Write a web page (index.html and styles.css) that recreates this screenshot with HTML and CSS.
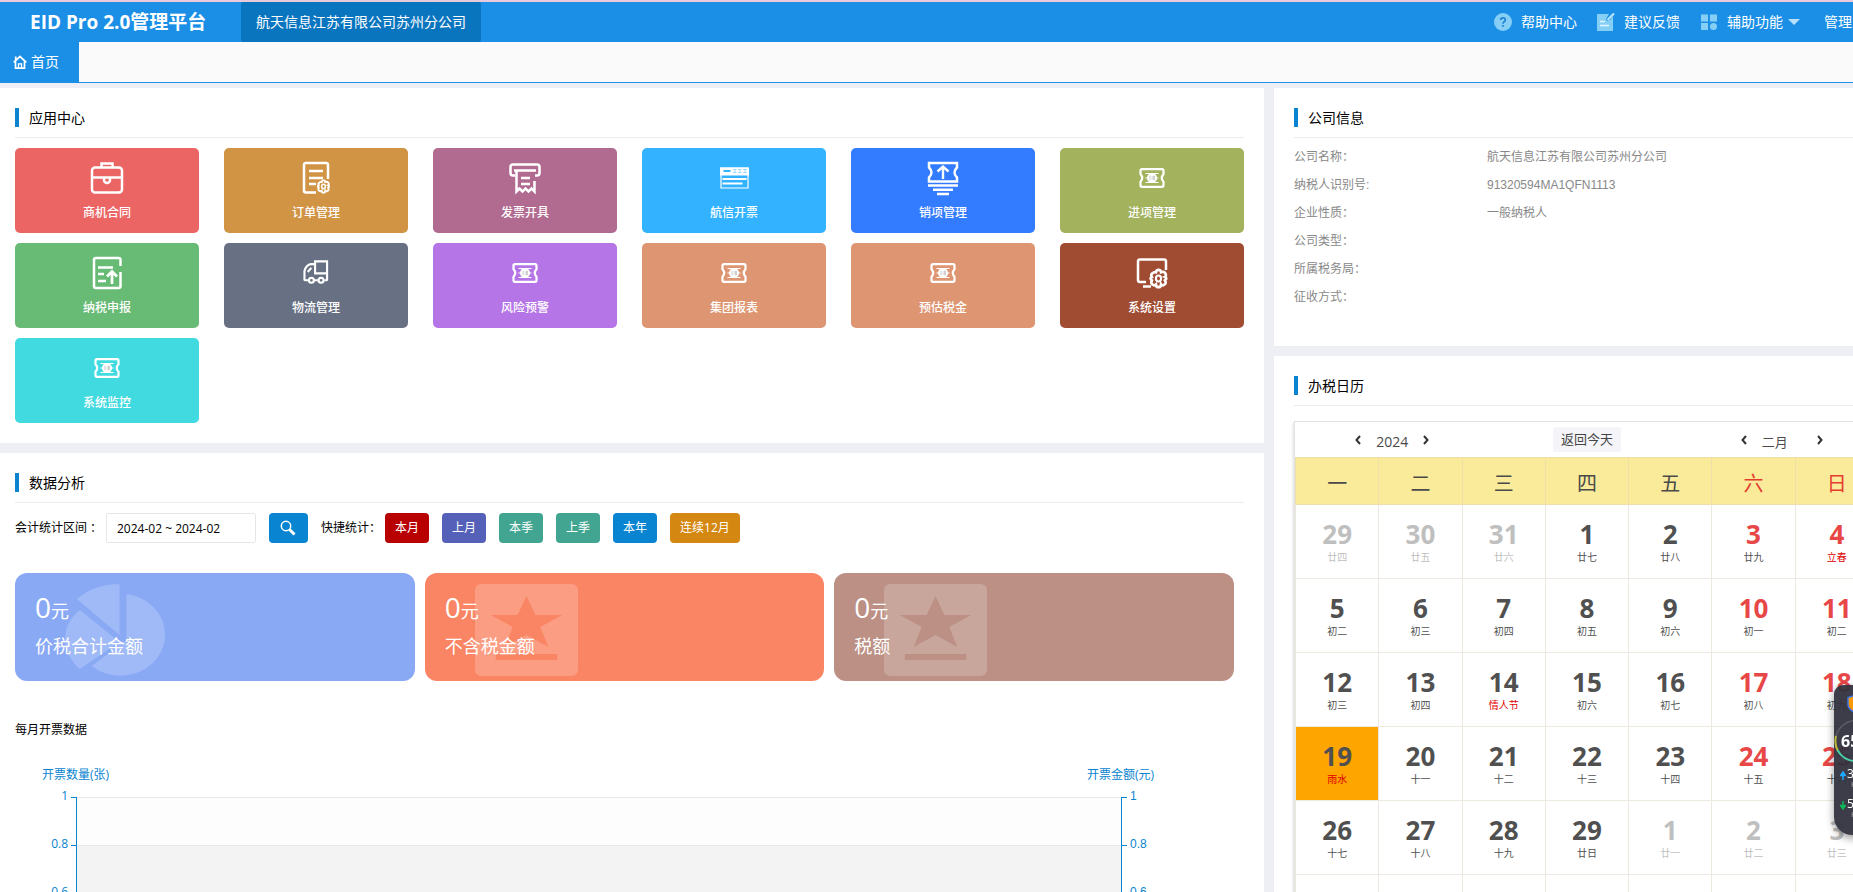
FILE: index.html
```html
<!DOCTYPE html>
<html lang="zh-CN">
<head>
<meta charset="utf-8">
<title>EID Pro 2.0管理平台</title>
<link rel="stylesheet" href="styles.css">
</head>
<body>
<svg class="defs" aria-hidden="true">
  <symbol id="i-ticket" viewBox="0 0 26 20">
    <path d="M3 1.200h20q1.500 0 1.500 1.500v3.500q-3.500 3.800 0 7.600v3.500q0 1.500-1.500 1.500H3q-1.500 0-1.500-1.500v-3.500q3.500-3.800 0-7.600V2.700Q1.500 1.200 3 1.200z" fill="none" stroke="currentColor" stroke-width="2.200"/>
    <circle cx="13" cy="10" r="5" fill="currentColor"/>
    <path d="M6.500 5.500h13M6.500 14.500h13M6.500 10h13" stroke="currentColor" stroke-width="1.200"/>
    <path d="M11 7.500v5M15 7.500v5M12.500 9h3.500M12.500 11h3.500" stroke="#0003" stroke-width="1"/>
  </symbol>
  <symbol id="i-gear" viewBox="0 0 14 14">
    <path d="M7 1.200q1.500 0 1.700 1.600 2.400-.8 3 1t-.4 2.200q1.800 1 0 2.300 1.200 1.800-.4 2.800t-2.200-.1Q8.500 12.800 7 12.800T5.300 11q-1.200 1-2.400 0t-.3-2.700q-1.800-1.300 0-2.300-1-1.400.3-2.500t2.400-.7Q5.500 1.200 7 1.200z" fill="none" stroke="currentColor" stroke-width="1.800"/>
    <ellipse cx="7" cy="7" rx="1.700" ry="2" fill="none" stroke="currentColor" stroke-width="1.400"/>
  </symbol>
</svg>
<div class="page">
  <header class="topbar">
    <h1 class="brand">EID Pro 2.0管理平台</h1>
    <div class="company-tag">航天信息江苏有限公司苏州分公司</div>
    <nav class="tools">
      <a class="tool" href="#">
        <svg class="tool-icon" viewBox="0 0 18 18"><circle cx="9" cy="9" r="9" fill="#85cff7"/><path d="M6.700 7q0-2.300 2.300-2.300T11.300 7q0 1.200-1.200 1.900Q9 9.600 9 10.800M9 12v1.800" fill="none" stroke="#1b7fcf" stroke-width="1.600"/></svg>
        帮助中心</a>
      <a class="tool" href="#">
        <svg class="tool-icon" viewBox="0 0 18 18"><path d="M0 1h12l-3 5 1 2 3-1 3-4v15H0z" fill="#85cff7"/><path d="M3 8.500h5M3 12.500h9" stroke="#e4f5ff" stroke-width="1.500"/><path d="M10.500 7L17 .5" stroke="#b5e2fc" stroke-width="2.200"/></svg>
        建议反馈</a>
      <a class="tool" href="#">
        <svg class="tool-icon" viewBox="0 0 18 18"><path d="M1 1.500h7v7H1zM10 1.500h7v7h-7zM1 10h7v7H1z" fill="#85cff7"/><circle cx="13.500" cy="13.500" r="3.500" fill="#85cff7"/></svg>
        辅助功能<span class="caret"></span></a>
      <a class="tool tool-user" href="#">管理员</a>
    </nav>
  </header>
  <nav class="tabs">
    <a class="tab" href="#"><svg class="tab-icon" viewBox="0 0 14 14"><path d="M.7 7.300L7 1.500l6.300 5.800M2.500 6.500v6.700h9V6.500M2.700 5V1.500" fill="none" stroke="currentColor" stroke-width="1.700"/><path d="M5.500 13V8.800h3V13" fill="none" stroke="currentColor" stroke-width="1.300"/></svg>首页</a>
  </nav>

  <main class="board">
    <div class="col">
      <section class="panel">
        <h2 class="panel-title">应用中心</h2>
        <div class="tiles">
          <a class="tile red" href="#"><svg class="tile-icon" viewBox="0 0 36 36"><g fill="none" stroke="currentColor" stroke-width="2.500"><rect x="3" y="7.500" width="30" height="25" rx="3"/><path d="M12.500 7V3.500h11V7M3 17.500h30M15 18v2a3 3 0 0 0 6 0v-2"/></g></svg>商机合同</a>
          <a class="tile amber" href="#"><svg class="tile-icon" viewBox="0 0 36 36"><path d="M18 32.500H8q-2 0-2-2V5q0-2 2-2h20q2 0 2 2v14" fill="none" stroke="currentColor" stroke-width="2.500"/><path d="M11 11h14M11 18h14M11 24h7" stroke="currentColor" stroke-width="2.500"/><use href="#i-gear" x="18" y="19" width="15" height="15"/></svg>订单管理</a>
          <a class="tile plum" href="#"><svg class="tile-icon" viewBox="0 0 36 36"><path d="M8 15.500H6q-2.500 0-2.500-2.500V7Q3.500 4.500 6 4.500h24q2.500 0 2.500 2.500v6q0 2.500-2.500 2.500h-2M7 10.500h22M9.500 10.500v21l3-3 3 3 3-3 3 3 3-3 3 3V21" fill="none" stroke="currentColor" stroke-width="2.500"/><path d="M14 18h9M14 24h9" stroke="currentColor" stroke-width="2.500"/></svg>发票开具</a>
          <a class="tile sky" href="#"><svg class="tile-icon" viewBox="0 0 36 36"><path d="M5 8h27v20H5z" fill="none" stroke="currentColor" stroke-width="1.200"/><path d="M4 7.500h29v8H4z" fill="currentColor"/><path d="M7.500 11h7" stroke="#32b2ff" stroke-width="2"/><path d="M17 9.500h3.500M17 12.500h3.500M22 9.500h3.500M22 12.500h3.500M27 9.500h4M27 12.500h4M19 9v4M24 9v4M29 9v4" stroke="#8fd5ff" stroke-width=".8"/><path d="M6.500 19h24M6.500 23.500h20" stroke="currentColor" stroke-width="2"/></svg>航信开票</a>
          <a class="tile blue" href="#"><svg class="tile-icon" viewBox="0 0 36 36"><path d="M4 3h28v4.500q-5 5 0 10V21.500H4v-4q5-5 0-10z" fill="none" stroke="currentColor" stroke-width="2.500"/><path d="M18 19V7M12.500 11.500L18 6.500l5.500 5M3 25.500h30M8 29.700h20M12 34h12" fill="none" stroke="currentColor" stroke-width="2.400"/></svg>销项管理</a>
          <a class="tile olive" href="#"><svg class="tile-icon small"><use href="#i-ticket"/></svg>进项管理</a>
          <a class="tile green" href="#"><svg class="tile-icon" viewBox="0 0 36 36"><path d="M31.500 11V5q0-2-2-2H7Q5 3 5 5v26q0 2 2 2h22.500q2 0 2-2V17" fill="none" stroke="currentColor" stroke-width="2.500"/><path d="M9 12.500h15M9 19h6M9 26h8M23 29V17M18 21.500l5-5 5 5" fill="none" stroke="currentColor" stroke-width="2.700"/></svg>纳税申报</a>
          <a class="tile slate" href="#"><svg class="tile-icon truck" viewBox="4 5 28 26"><g fill="none" stroke="currentColor" stroke-width="2.300"><path d="M9.500 27H6.500q-1 0-1-1v-9q2-7 7-7.500h4.500M17 6.500h13v13H17zM30 19.500V26q0 1-1 1h-2M16 27h4"/><circle cx="13" cy="27" r="2.700"/><circle cx="23.500" cy="27" r="2.700"/><path d="M9 18l4-4.500"/></g></svg>物流管理</a>
          <a class="tile violet" href="#"><svg class="tile-icon small"><use href="#i-ticket"/></svg>风险预警</a>
          <a class="tile salmon" href="#"><svg class="tile-icon small"><use href="#i-ticket"/></svg>集团报表</a>
          <a class="tile salmon" href="#"><svg class="tile-icon small"><use href="#i-ticket"/></svg>预估税金</a>
          <a class="tile brick" href="#"><svg class="tile-icon" viewBox="0 0 36 36"><path d="M12 27H6q-2 0-2-2V6.500q0-2 2-2h24q2 0 2 2V15M9 31.500h8" fill="none" stroke="currentColor" stroke-width="2.500"/><use href="#i-gear" x="14" y="13" width="21" height="21"/></svg>系统设置</a>
          <a class="tile cyan" href="#"><svg class="tile-icon small"><use href="#i-ticket"/></svg>系统监控</a>
        </div>
      </section>

      <section class="panel panel-data">
        <h2 class="panel-title">数据分析</h2>
        <form class="filter">
          <label class="filter-label" for="range">会计统计区间 ：</label>
          <input class="range" id="range" type="text" value="2024-02 ~ 2024-02">
          <button class="btn search" type="button" aria-label="查询"><svg class="search-icon" viewBox="0 0 16 16"><circle cx="6" cy="6" r="4.700" fill="none" stroke="#fff" stroke-width="1.500"/><path d="M9.500 9.500l5 5" stroke="#fff" stroke-width="3"/></svg></button>
          <span class="filter-label quick">快捷统计：</span>
          <button class="btn crimson" type="button">本月</button>
          <button class="btn indigo" type="button">上月</button>
          <button class="btn teal" type="button">本季</button>
          <button class="btn teal" type="button">上季</button>
          <button class="btn azure" type="button">本年</button>
          <button class="btn gold" type="button">连续12月</button>
        </form>
        <div class="cards">
          <article class="card periwinkle">
            <svg class="card-icon" viewBox="0 0 104 92" preserveAspectRatio="none"><g fill="#fff" fill-opacity=".2"><path d="M55 0v51L12 15Q30 0 55 0z"/><path d="M15 26l40 32-40 27Q0 72 0 54 1 37 15 26z"/><path d="M62 10A45 41 0 1 1 27 82L62 56z"/></g></svg>
            <p class="amount">0<span class="unit">元</span></p><p class="card-label">价税合计金额</p></article>
          <article class="card coral">
            <svg class="card-icon" viewBox="0 0 104 92" preserveAspectRatio="none"><path fill="#fff" fill-opacity=".2" fill-rule="evenodd" d="M7 0h90q7 0 7 7v78q0 7-7 7H7q-7 0-7-7V7Q0 0 7 0zM52 12l-9 19H16l22 12-8 20 22-12 22 12-8-20 22-12H61zM21 70v6h62v-6z"/></svg>
            <p class="amount">0<span class="unit">元</span></p><p class="card-label">不含税金额</p></article>
          <article class="card mocha">
            <svg class="card-icon" viewBox="0 0 104 92" preserveAspectRatio="none"><path fill="#fff" fill-opacity=".2" fill-rule="evenodd" d="M7 0h90q7 0 7 7v78q0 7-7 7H7q-7 0-7-7V7Q0 0 7 0zM52 12l-9 19H16l22 12-8 20 22-12 22 12-8-20 22-12H61zM21 70v6h62v-6z"/></svg>
            <p class="amount">0<span class="unit">元</span></p><p class="card-label">税额</p></article>
        </div>
        <h3 class="chart-title">每月开票数据</h3>
        <div class="chart">
          <div class="axis-names"><span>开票数量(张)</span><span>开票金额(元)</span></div>
          <div class="band"><span class="tick left">1</span><div class="plot"></div><span class="tick right">1</span></div>
          <div class="band shaded"><span class="tick left">0.8</span><div class="plot"></div><span class="tick right">0.8</span></div>
          <div class="band"><span class="tick left">0.6</span><div class="plot"></div><span class="tick right">0.6</span></div>
        </div>
      </section>
    </div>

    <div class="col">
      <section class="panel panel-side panel-company">
        <h2 class="panel-title">公司信息</h2>
        <dl class="info">
          <dt>公司名称：</dt><dd>航天信息江苏有限公司苏州分公司</dd>
          <dt>纳税人识别号:</dt><dd>91320594MA1QFN1113</dd>
          <dt>企业性质：</dt><dd>一般纳税人</dd>
          <dt>公司类型：</dt><dd></dd>
          <dt>所属税务局：</dt><dd></dd>
          <dt>征收方式：</dt><dd></dd>
        </dl>
      </section>
      <section class="panel panel-side panel-calendar">
        <h2 class="panel-title">办税日历</h2>
        <div class="calendar">
          <div class="cal-bar">
            <div class="stepper"><button class="arrow" type="button" aria-label="上一年"><svg class="chev" viewBox="0 0 6 10"><path d="M5 1L1.500 5 5 9"/></svg></button><span class="year">2024</span><button class="arrow" type="button" aria-label="下一年"><svg class="chev" viewBox="0 0 6 10"><path d="M1 1l3.500 4L1 9"/></svg></button></div>
            <div class="stepper"><button class="today-btn" type="button">返回今天</button></div>
            <div class="stepper"><button class="arrow" type="button" aria-label="上个月"><svg class="chev" viewBox="0 0 6 10"><path d="M5 1L1.500 5 5 9"/></svg></button><span class="month">二月</span><button class="arrow" type="button" aria-label="下个月"><svg class="chev" viewBox="0 0 6 10"><path d="M1 1l3.500 4L1 9"/></svg></button></div>
          </div>
          <table class="cal">
            <thead><tr><th>一</th><th>二</th><th>三</th><th>四</th><th>五</th><th class="rest">六</th><th class="rest">日</th></tr></thead>
            <tbody>
              <tr><td class="out">29<small>廿四</small></td><td class="out">30<small>廿五</small></td><td class="out">31<small>廿六</small></td><td>1<small>廿七</small></td><td>2<small>廿八</small></td><td class="we">3<small>廿九</small></td><td class="we">4<small class="fest">立春</small></td></tr>
              <tr><td>5<small>初二</small></td><td>6<small>初三</small></td><td>7<small>初四</small></td><td>8<small>初五</small></td><td>9<small>初六</small></td><td class="we">10<small>初一</small></td><td class="we">11<small>初二</small></td></tr>
              <tr><td>12<small>初三</small></td><td>13<small>初四</small></td><td>14<small class="fest">情人节</small></td><td>15<small>初六</small></td><td>16<small>初七</small></td><td class="we">17<small>初八</small></td><td class="we">18<small>初九</small></td></tr>
              <tr><td class="now">19<small class="fest">雨水</small></td><td>20<small>十一</small></td><td>21<small>十二</small></td><td>22<small>十三</small></td><td>23<small>十四</small></td><td class="we">24<small>十五</small></td><td class="we">25<small>十六</small></td></tr>
              <tr><td>26<small>十七</small></td><td>27<small>十八</small></td><td>28<small>十九</small></td><td>29<small>廿日</small></td><td class="out">1<small>廿一</small></td><td class="out">2<small>廿二</small></td><td class="out">3<small>廿三</small></td></tr>
              <tr><td></td><td></td><td></td><td></td><td></td><td></td><td></td></tr>
            </tbody>
          </table>
        </div>
      </section>
    </div>
  </main>
</div>
<aside class="monitor">
  <svg class="shield" viewBox="0 0 20 20"><path d="M10 1l8 2.500v7q0 5-8 8.500-8-3.500-8-8.500v-7z" fill="#f90" stroke="#3c74e8" stroke-width="1.500"/></svg>
  <div class="gauge">
    <svg class="ring" viewBox="0 0 44 44"><circle cx="22" cy="22" r="20.500" fill="none" stroke="#5a5c66" stroke-width="1.500"/><path d="M2 17a20.500 20.500 0 0 0 2 15" fill="none" stroke="#b9b83a" stroke-width="2"/><path d="M3.500 31A20.500 20.500 0 0 0 40 31" fill="none" stroke="#45cfa5" stroke-width="2"/></svg>
    <strong class="score">65</strong>
  </div>
  <div class="rate"><svg class="rate-icon" viewBox="0 0 6 9"><path d="M3 9V2M.5 4.500L3 1l2.500 3.500z" stroke="#1ea7ff" fill="#1ea7ff" stroke-width="1.500"/></svg><span>3<small>K/s</small></span></div>
  <div class="rate"><svg class="rate-icon" viewBox="0 0 6 9"><path d="M3 0v7M.5 4.500L3 8l2.500-3.500z" stroke="#10b85c" fill="#10b85c" stroke-width="1.500"/></svg><span>5<small>K/s</small></span></div>
</aside>
</body>
</html>
```
FILE: styles.css
```css
* { box-sizing: border-box; }
html, body { height: 100%; }
body {
  margin: 0;
  overflow: hidden;
  background: #eeeff5;
  color: #000;
  font: 12px/20px "Open Sans", "Noto Sans CJK SC", sans-serif;
}
h1, h2, h3, p, dl, dd { margin: 0; font-weight: 400; }
a { color: inherit; text-decoration: none; }
button, input { font: inherit; }
button { border: 0; padding: 0; cursor: pointer; }
svg { display: block; flex: none; }
.defs { position: absolute; width: 0; height: 0; }
.page { min-width: 1900px; }

.topbar {
  display: flex;
  align-items: stretch;
  height: 42px;
  border-top: 2px solid #e9c9dc;
  background: #1b8fe6;
  color: #fff;
  font-size: 14px;
  line-height: 40px;
}
.brand { width: 241px; padding-left: 30px; font-size: 19px; font-weight: 700; line-height: 40px; white-space: nowrap; }
.company-tag { padding: 0 15px; border-radius: 2px; background: #0a75bf; }
.tools { display: flex; margin-left: auto; padding-right: 34px; gap: 20px; }
.tool { display: flex; align-items: center; gap: 9px; }
.tool-icon { width: 18px; height: 18px; }
.caret { margin-left: -4px; border: 6px solid transparent; border-top-color: #b9e0fb; border-bottom: 0; }
.tool-user { padding-left: 4px; }

.tabs { height: 41px; border-bottom: 1px solid #1b8fe6; background: #fafafa; }
.tab { display: flex; align-items: center; gap: 4px; width: 79px; height: 40px; padding-left: 13px; background: #1b8fe6; color: #fff; font-size: 14px; }
.tab-icon { width: 14px; height: 14px; }

.board { display: grid; grid-template-columns: 1264fr 626fr; gap: 10px; margin-top: 5px; }
.col { display: flex; flex-direction: column; gap: 10px; }
.panel { padding: 20px 20px 20px 15px; background: #fff; }
.panel-side { padding-left: 20px; }
.panel-title {
  position: relative;
  padding: 0 0 10px 14px;
  border-bottom: 1px solid #ededed;
  font-size: 14px;
  line-height: 19px;
}
.panel-title::before { content: ""; position: absolute; left: 0; top: 0; width: 4px; height: 19px; background: #0984d0; }

.tiles { display: grid; grid-template-columns: repeat(6, 1fr); gap: 10px 25px; margin-top: 10px; }
.tile { display: flex; flex-direction: column; align-items: center; height: 85px; padding-top: 12px; gap: 7px; border-radius: 5px; color: #fff; font-weight: 500; }
.tile-icon { width: 36px; height: 36px; }
.tile-icon.small { width: 26px; height: 20px; margin: 8px 0; }
.tile-icon.truck { width: 28px; height: 24px; margin: 5px 0 7px; }
.red { background: #eb6565; }
.amber { background: #d19344; }
.plum { background: #b16b91; }
.sky { background: #32b2ff; }
.blue { background: #337bff; }
.olive { background: #a2b25d; }
.green { background: #67bb75; }
.slate { background: #687183; }
.violet { background: #b575e6; }
.salmon { background: #de9572; }
.brick { background: #a04c33; }
.cyan { background: #41dae0; }

.filter { display: flex; align-items: center; height: 30px; margin-top: 10px; }
.filter-label { width: 91px; white-space: nowrap; }
.filter-label.quick { width: 64px; }
.range { width: 150px; height: 30px; margin-right: 13px; padding: 0 10px; border: 1px solid #e6e6e6; border-radius: 2px; background: #fff; }
.btn { height: 30px; margin-right: 13px; padding: 0 10px; border-radius: 4px; color: #fff; }
.search { width: 39px; padding: 0 11px; background: #0984d0; }
.search-icon { width: 16px; height: 16px; }
.crimson { background: #b80000; }
.indigo { background: #5560b8; }
.teal { background: #42a591; }
.azure { background: #0984d0; }
.gold { background: #d48811; }

.cards { display: grid; grid-template-columns: repeat(3, 1fr); gap: 10px; margin: 30px 10px 0 0; }
.card { position: relative; height: 108px; padding: 16px 20px; border-radius: 12px; color: #fff; }
.card-icon { position: absolute; left: 50px; top: 11px; width: 103px; height: 92px; }
.amount { position: relative; font-size: 28px; line-height: 36px; }
.unit { font-size: 18px; }
.card-label { position: relative; font-size: 18px; line-height: 34px; }
.periwinkle { background: #89a9f5; }
.coral { background: #fa8564; }
.mocha { background: #bc9084; }

.chart-title { margin-top: 39px; font-size: 12px; line-height: 20px; }
.chart { margin-top: 25px; color: #0984d0; }
.axis-names { display: flex; justify-content: space-between; margin: 0 90px 12px 27px; }
.band { display: flex; height: 48px; }
.plot { flex: 1; border: 1px solid #0984d0; border-width: 0 1px; background: linear-gradient(#e8e8e8 1px, #fdfdfd 1px); }
.shaded .plot { background: linear-gradient(#e8e8e8 1px, #f3f3f3 1px); }
.tick { position: relative; top: -11px; height: 20px; }
.tick::after { content: ""; position: absolute; top: 11px; width: 5px; height: 1px; background: #0984d0; }
.left { width: 61px; padding-right: 8px; text-align: right; }
.left::after { right: 0; }
.right { width: 122px; padding-left: 8px; font-family: "Liberation Sans", sans-serif; }
.right::after { left: 0; }

.panel-company { height: 258px; }
.info { display: grid; grid-template-columns: 193px 1fr; margin-top: 5px; color: #888; font-family: "Liberation Sans", "Noto Sans CJK SC", sans-serif; line-height: 28px; }
.panel-calendar { flex: 1; }
.calendar { margin-top: 15px; border: 1px solid #e2e2e2; box-shadow: -1px 2px 3px #0002; color: #4a4a4a; }
.cal-bar { display: grid; grid-template-columns: repeat(3, 1fr); height: 35px; }
.stepper { display: flex; align-items: center; justify-content: center; gap: 15px; }
.arrow { background: none; }
.chev { width: 6px; height: 10px; fill: none; stroke: #333; stroke-width: 2; }
.year { padding-top: 4px; font-size: 14px; }
.month { width: 40px; padding-top: 4px; font-size: 13px; }
.today-btn { height: 25px; padding: 0 8px; border-radius: 2px; background: #f4f4f9; color: #444; font-size: 13px; line-height: 25px; }
.cal { width: 100%; border-collapse: collapse; table-layout: fixed; text-align: center; }
.cal th { height: 47px; padding: 6px 0 0; border: 1px solid #eee0aa; background: #faeb9b; font-size: 20px; font-weight: 400; line-height: 30px; }
.cal th.rest { color: #e63c2e; }
.cal td { height: 74px; padding: 2px 0 0; border: 1px solid #eee9e0; color: #505050; font-size: 26px; font-weight: 700; line-height: 28px; }
.cal small { display: block; font-size: 10px; font-weight: 400; line-height: 18px; }
.cal td.out { color: #bfbfbf; }
.cal td.we { color: #e84747; }
.cal td.we small { color: #505050; }
.cal td small.fest { color: #e00000; }
.cal td.we small.fest { color: #e00000; }
.cal td.now { background: #ffa500; }

.monitor {
  position: fixed;
  right: -41px;
  top: 685px;
  width: 60px;
  height: 150px;
  padding-top: 9px;
  border-radius: 9px 9px 18px 18px;
  background: #31333ef2;
  box-shadow: 0 3px 9px #0006;
  color: #fff;
}
.shield { width: 20px; height: 20px; margin-left: 12px; }
.gauge { display: grid; place-items: center start; margin-top: 5px; }
.ring, .score { grid-area: 1 / 1; }
.ring { width: 44px; height: 44px; }
.score { padding-left: 7px; font-size: 16px; }
.rate { display: flex; gap: 1px; height: 30px; padding: 4px 0 0 6px; line-height: 13px; }
.rate-icon { width: 6px; height: 9px; margin-top: 4px; }
.rate small { display: block; padding-left: 4px; color: #aaa; font-size: 8px; line-height: 8px; }
```
